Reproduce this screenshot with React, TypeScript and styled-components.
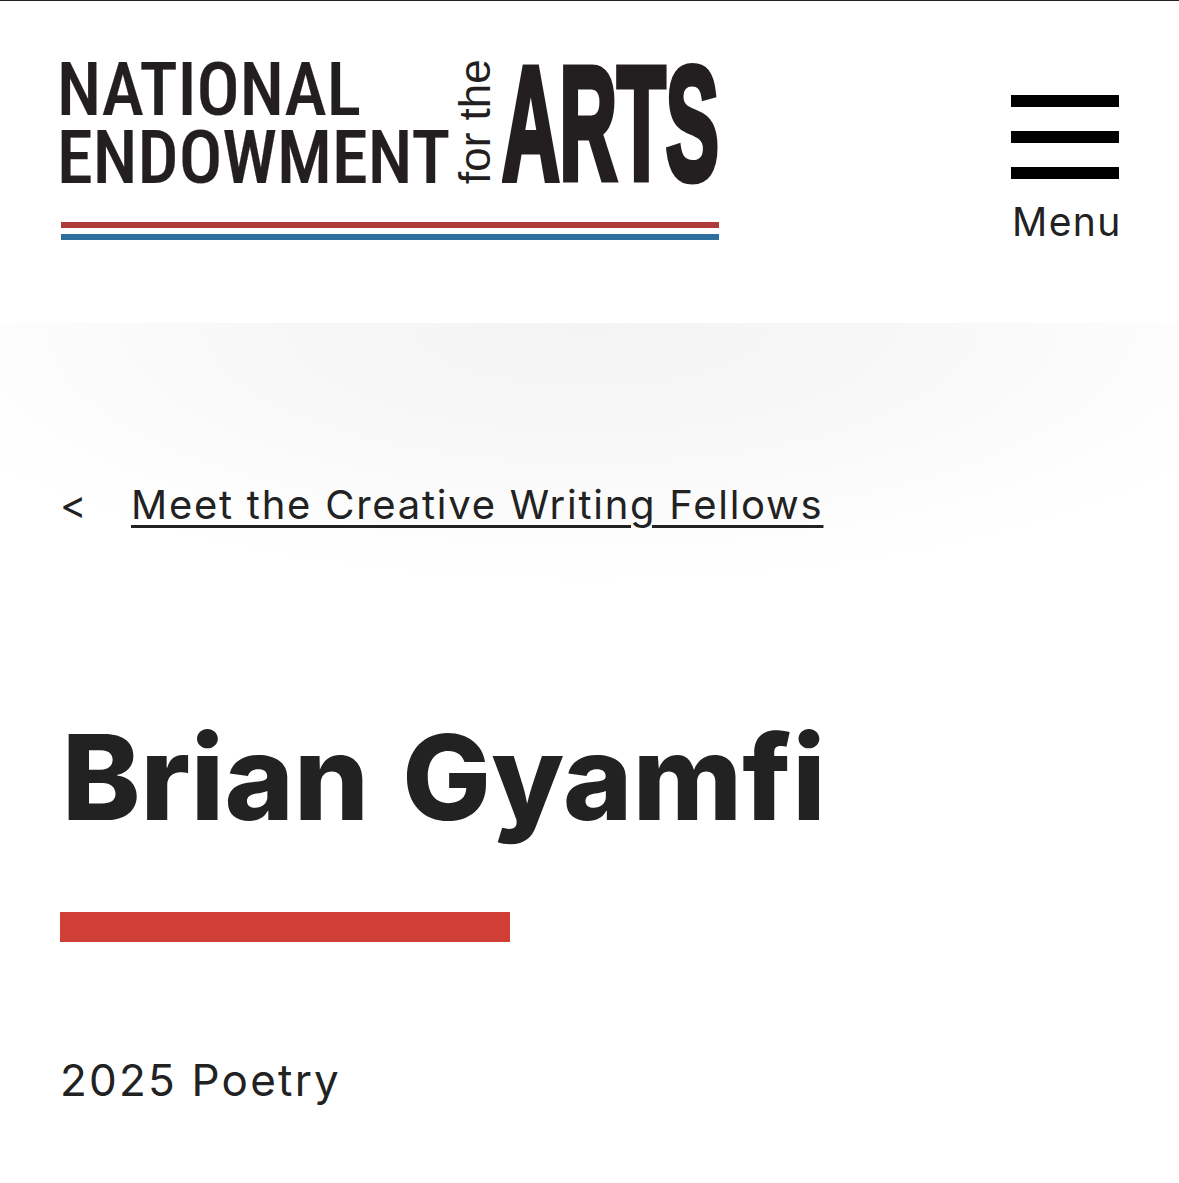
import styled, { createGlobalStyle } from 'styled-components';

const Global = createGlobalStyle`
  html, body { margin: 0; padding: 0; background: #fff; }
  body { font-family: Inter, "Open Sans", "Liberation Sans", sans-serif; color: #222; }
`;

const Page = styled.main`
  width: 1179px;
  height: 1183px;
  overflow: hidden;
  border-top: 1px solid #222;
  box-sizing: border-box;
`;

const Header = styled.header`
  height: 322px;
  padding: 59px 60px 0;
  box-sizing: border-box;
  display: flex;
  justify-content: space-between;
  align-items: flex-start;
`;

const Logo = styled.div`
  width: 660px;
  display: flex;
  flex-direction: column;
`;

const LogoWords = styled.div`
  height: 127px;
  display: flex;
  align-items: flex-start;
  color: #231f20;
`;

const LogoName = styled.div`
  font-family: "Roboto Condensed", "Liberation Sans Narrow", "Liberation Sans", sans-serif;
  font-size: 74px;
  line-height: 68px;
  font-weight: 500;
  width: 393px;
  margin: -4px 0 0 -3px;
  white-space: nowrap;
  -webkit-text-stroke: 0.2px #231f20;
`;

const LogoLine = styled.div<{ $stretch: number }>`
  transform: scaleX(${(p) => p.$stretch});
  transform-origin: left center;
`;

const LogoFor = styled.div`
  writing-mode: vertical-rl;
  transform: rotate(180deg);
  font-family: "Liberation Sans", sans-serif;
  font-size: 44px;
  line-height: 40px;
  height: 122px;
  width: 40px;
  margin: 2px 7px 0 5px;
  text-align: left;
  white-space: nowrap;
`;

const LogoArts = styled.div`
  font-family: "Liberation Sans", sans-serif;
  font-weight: 700;
  font-size: 161px;
  line-height: 122px;
  height: 122px;
  margin-top: 2px;
  transform: scaleX(0.495);
  transform-origin: left top;
  white-space: nowrap;
  -webkit-text-stroke: 7px #231f20;
`;

const Stripes = styled.div`
  margin-top: 35px;
  padding: 0 1px;
  display: flex;
  flex-direction: column;
  gap: 6px;
`;

const Stripe = styled.div<{ $color: string }>`
  height: 6px;
  background: ${(p) => p.$color};
`;

const MenuButton = styled.div`
  margin-top: 35px;
  width: 108px;
  display: flex;
  flex-direction: column;
`;

const MenuBar = styled.div`
  height: 12px;
  background: #000;
  margin-bottom: 24px;
`;

const MenuLabel = styled.div`
  font-size: 39px;
  font-weight: 400;
  line-height: 44px;
  margin: -3px 0 0 1px;
  letter-spacing: 1.4px;
  white-space: nowrap;
`;

const Content = styled.section`
  height: 860px;
  padding: 0 60px;
  box-sizing: border-box;
  background: radial-gradient(ellipse 720px 260px at 50% 0, #f4f4f4 0, #f7f7f7 40%, #fbfbfb 70%, #fefefe 90%, #fff 100%);
  background-repeat: no-repeat;
`;

const BackRow = styled.div`
  padding-top: 156px;
  display: flex;
  align-items: center;
  font-size: 40px;
  font-weight: 400;
  line-height: 52px;
`;

const BackArrow = styled.span`
  width: 71px;
`;

const BackLink = styled.a`
  color: #222;
  text-decoration: underline;
  text-underline-offset: 6px;
  text-decoration-thickness: 3px;
  letter-spacing: 1.75px;
`;

const Name = styled.h1`
  margin: 181px 0 0 2px;
  font-size: 118px;
  line-height: 130px;
  font-weight: 800;
  letter-spacing: 0.2px;
  word-spacing: 7px;
  color: #222;
  white-space: nowrap;
`;

const Rule = styled.div`
  margin-top: 70px;
  width: 450px;
  height: 30px;
  background: #d03f36;
`;

const Meta = styled.p`
  margin: 112px 0 0;
  font-size: 44px;
  font-weight: 400;
  line-height: 52px;
  letter-spacing: 2.2px;
`;

export default function App() {
  return (
    <Page>
      <Global />
      <Header>
        <Logo>
          <LogoWords>
            <LogoName>
              <LogoLine $stretch={0.969}>NATIONAL</LogoLine>
              <LogoLine $stretch={0.98}>ENDOWMENT</LogoLine>
            </LogoName>
            <LogoFor>for the</LogoFor>
            <LogoArts>ARTS</LogoArts>
          </LogoWords>
          <Stripes>
            <Stripe $color="#ae3a3a" />
            <Stripe $color="#2f6f9f" />
          </Stripes>
        </Logo>
        <MenuButton>
          <MenuBar />
          <MenuBar />
          <MenuBar />
          <MenuLabel>Menu</MenuLabel>
        </MenuButton>
      </Header>
      <Content>
        <BackRow>
          <BackArrow>&lt;</BackArrow>
          <BackLink>Meet the Creative Writing Fellows</BackLink>
        </BackRow>
        <Name>Brian Gyamfi</Name>
        <Rule />
        <Meta>2025 Poetry</Meta>
      </Content>
    </Page>
  );
}
